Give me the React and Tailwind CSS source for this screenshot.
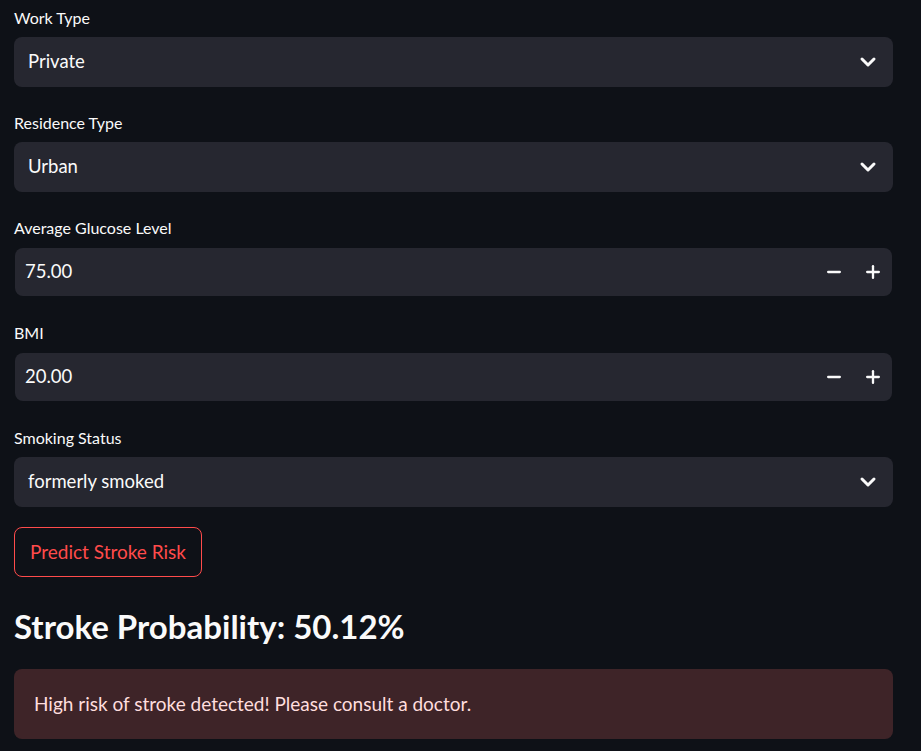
import { ChevronDown, Minus, Plus } from 'lucide-react';

const font = { fontFamily: 'Lato, "Source Sans Pro", sans-serif' };

function Label({ children, gap = 'mb-[9px]' }) {
  return <label className={`block text-[16px] leading-[21px] text-[#fafafa] ${gap}`}>{children}</label>;
}

function SelectBox({ label, value, last }) {
  return (
    <div className={last ? 'mb-[20px]' : 'mb-[25px]'}>
      <Label>{label}</Label>
      <div className="h-[50px] rounded-lg bg-[#262730] flex items-center justify-between pl-[14px] pr-[13px]">
        <span className="text-[18.5px] text-[#fafafa]">{value}</span>
        <ChevronDown size={24} strokeWidth={3} className="text-[#fafafa]" />
      </div>
    </div>
  );
}

function NumberBox({ label, value }) {
  return (
    <div className="mb-[26px]">
      <Label gap="mb-[10px]">{label}</Label>
      <div className="px-px">
        <div className="h-[48px] rounded-lg bg-[#262730] flex items-center pl-[10px]">
          <span className="flex-1 text-[18.5px] text-[#fafafa]">{value}</span>
          <button className="w-[40px] h-full flex items-center justify-center text-[#fafafa]">
            <Minus size={20} strokeWidth={2.8} />
          </button>
          <button className="w-[38px] h-full flex items-center justify-center text-[#fafafa]">
            <Plus size={20} strokeWidth={2.8} />
          </button>
        </div>
      </div>
    </div>
  );
}

export default function App() {
  return (
    <div className="min-h-screen bg-[#0e1117] pl-[14px] pr-[28px] pt-[7px]" style={font}>
      <SelectBox label="Work Type" value="Private" />
      <SelectBox label="Residence Type" value="Urban" />
      <NumberBox label="Average Glucose Level" value="75.00" />
      <NumberBox label="BMI" value="20.00" />
      <SelectBox label="Smoking Status" value="formerly smoked" last />
      <button className="h-[50px] w-[188px] rounded-lg border border-[#ff4b4b] text-[#ff4b4b] text-[19px] bg-[#0e1117]">
        Predict Stroke Risk
      </button>
      <h2 className="mt-[28px] mb-[22px] text-[33px] leading-[42px] font-bold text-[#fafafa]">
        Stroke Probability: 50.12%
      </h2>
      <div className="h-[70px] rounded-lg bg-[#3e2428] flex items-center px-5 text-[19px] text-[#ffdede]">
        High risk of stroke detected! Please consult a doctor.
      </div>
    </div>
  );
}
